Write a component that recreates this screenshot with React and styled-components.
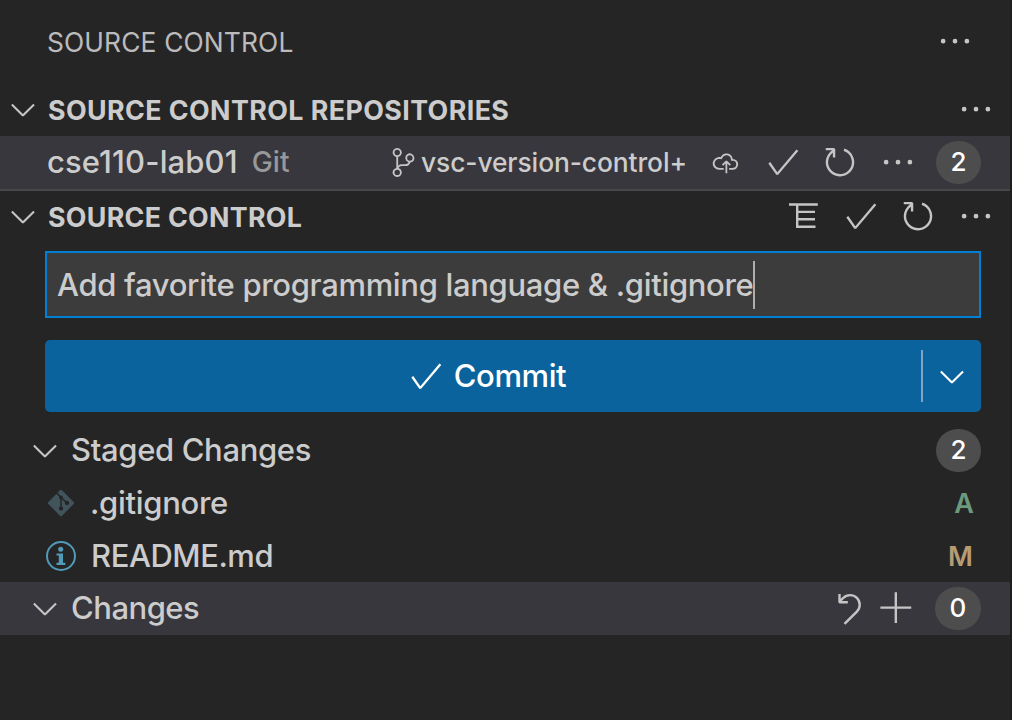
import React from "react";
import styled, { createGlobalStyle } from "styled-components";
import {
  VscChevronDown,
  VscCheck,
  VscRefresh,
  VscEllipsis,
  VscSourceControl,
  VscCloudUpload,
  VscDiscard,
  VscAdd,
} from "react-icons/vsc";

const GlobalStyle = createGlobalStyle`
  * { box-sizing: border-box; }
  body { margin: 0; background: #252526; }
`;

const Sidebar = styled.main`
  width: 1012px;
  height: 720px;
  display: flex;
  flex-direction: column;
  overflow: hidden;
  background: #252526;
  border-right: 2px solid #1e1e1e;
  color: #cccccc;
  font-family: Inter, "Liberation Sans", sans-serif;
  font-size: 31px;
  white-space: nowrap;
`;

const Row = styled.div`
  display: flex;
  align-items: center;
  flex: none;
  height: ${(p) => p.$height || 53}px;
  padding-left: ${(p) => p.$indent || 0}px;
  padding-right: ${(p) => p.$end ?? 29}px;
  background: ${(p) => (p.$active ? "#37373d" : "transparent")};
`;

const Divider = styled.div`
  flex: none;
  height: 2px;
  background: #474747;
`;

const Text = styled.span`
  display: block;
  flex: none;
  font-size: ${(p) => p.$size || 31}px;
  font-weight: ${(p) => p.$weight || 450};
  letter-spacing: ${(p) => p.$track || 0}px;
  color: ${(p) => p.$color || "#cccccc"};
  margin-left: ${(p) => p.$gap || 0}px;
  margin-bottom: ${(p) => p.$lift ?? 2}px;
  line-height: 1;
`;

const Spacer = styled.div`
  flex: 1;
`;

const IconSlot = styled.span`
  display: flex;
  flex: none;
  align-items: center;
  justify-content: center;
  width: ${(p) => p.$w || 38}px;
  margin-left: ${(p) => p.$gap || 0}px;
  margin-bottom: ${(p) => p.$lift || 0}px;
  color: ${(p) => p.$color || "#c5c5c5"};
`;

const Badge = styled.span`
  display: flex;
  flex: none;
  align-items: center;
  justify-content: center;
  width: ${(p) => p.$w || 45}px;
  height: 43px;
  margin-left: ${(p) => p.$gap || 0}px;
  padding-bottom: 1px;
  border-radius: 22px;
  background: #4d4d4d;
  color: #ffffff;
  font-size: 26px;
  font-weight: 500;
  line-height: 1;
`;

const MessageInput = styled.div`
  display: flex;
  align-items: center;
  flex: none;
  height: 67px;
  margin: 8px 29px 22px 45px;
  padding-left: 10px;
  border: 2px solid #007fd4;
  background: #3c3c3c;
`;

const Caret = styled.span`
  width: 2px;
  height: 48px;
  background: #aeafad;
`;

const CommitButton = styled.div`
  display: flex;
  align-items: center;
  flex: none;
  height: 72px;
  margin: 0 29px 12px 45px;
  border-radius: 5px;
  background: #0a639c;
`;

const CommitAction = styled.div`
  display: flex;
  align-items: center;
  justify-content: center;
  flex: 1;
  padding-left: 7px;
`;

const ButtonSeparator = styled.span`
  width: 2px;
  height: 52px;
  background: #7fa4c6;
`;

const DropdownAction = styled.div`
  display: flex;
  align-items: center;
  justify-content: center;
  width: 58px;
`;

const TreeIcon = () => (
  <svg width="38" height="38" viewBox="0 0 38 38" fill="none" stroke="currentColor" strokeWidth="2.4">
    <path d="M4 7.5 H32.8 M12.2 7.5 V30.9 M12.2 14.9 H30 M12.2 22.3 H30 M11 29.7 H30.5" />
  </svg>
);

const GitFileIcon = () => (
  <svg width="28" height="28" viewBox="0 0 28 28">
    <rect x="4.3" y="4.3" width="19.4" height="19.4" rx="1.5" transform="rotate(45 14 14)" fill="#41535b" />
    <g stroke="#252526" strokeWidth="1.5" fill="#252526">
      <path d="M8.8 3.2 L20 14 M14 8 V20" fill="none" />
      <circle cx="14" cy="19.6" r="1.4" />
      <circle cx="20" cy="14" r="1.4" />
      <circle cx="14" cy="8.4" r="1.1" />
    </g>
  </svg>
);

const InfoFileIcon = () => (
  <svg width="30" height="30" viewBox="0 0 30 30" fill="#519aba">
    <circle cx="15" cy="15" r="14" fill="none" stroke="#519aba" strokeWidth="2" />
    <circle cx="14.7" cy="8.3" r="2.5" />
    <path d="M10.5 12.5 H17 V21.8 H19.3 V24 H10.5 V21.8 H12.8 V14.5 H10.5 Z" />
  </svg>
);

const Chevron = ({ lift = 1 }) => (
  <IconSlot $lift={lift}>
    <VscChevronDown size={38.4} />
  </IconSlot>
);

const Action = ({ icon: Icon, gap = 0, size = 38.4, lift = 1 }) => (
  <IconSlot $gap={gap} $lift={lift}>
    <Icon size={size} />
  </IconSlot>
);

export default function App() {
  return (
    <>
      <GlobalStyle />
      <Sidebar>
        <Row $height={83} $indent={47} $end={36}>
          <Text $size={26.4} $weight={400} $lift={-1} $track={0.12} $color="#bbbbbb">SOURCE CONTROL</Text>
          <Spacer />
          <Action icon={VscEllipsis} />
        </Row>

        <Row $indent={4} $end={15}>
          <Chevron />
          <Text $size={26.8} $weight={700} $gap={6} $lift={-1} $track={0.42}>SOURCE CONTROL REPOSITORIES</Text>
          <Spacer />
          <Action icon={VscEllipsis} />
        </Row>
        <Row $indent={47} $active>
          <Text $track={0.12}>cse110-lab01</Text>
          <Text $size={28.2} $gap={14} $color="#98989b" $lift={0}>Git</Text>
          <Spacer />
          <IconSlot $w={29} $lift={1}>
            <VscSourceControl size={29} />
          </IconSlot>
          <Text $size={26.4} $gap={3} $lift={0} $track={-0.1}>vsc-version-control+</Text>
          <IconSlot $w={29} $gap={24} $lift={1}>
            <VscCloudUpload size={29} />
          </IconSlot>
          <Action icon={VscCheck} gap={24} />
          <Action icon={VscRefresh} gap={19} />
          <Action icon={VscEllipsis} gap={20} />
          <Badge $gap={19}>2</Badge>
        </Row>
        <Divider />

        <Row $height={52} $indent={4} $end={15}>
          <Chevron lift={2} />
          <Text $size={26.8} $weight={700} $gap={6} $lift={0} $track={0.3}>SOURCE CONTROL</Text>
          <Spacer />
          <Action icon={TreeIcon} lift={2} />
          <Action icon={VscCheck} gap={19} lift={2} />
          <Action icon={VscRefresh} gap={19} lift={2} />
          <Action icon={VscEllipsis} gap={20} lift={2} />
        </Row>

        <MessageInput>
          <Text $track={-0.32} $lift={0}>Add favorite programming language &amp; .gitignore</Text>
          <Caret />
        </MessageInput>

        <CommitButton>
          <CommitAction>
            <IconSlot $color="#ffffff">
              <VscCheck size={38.4} />
            </IconSlot>
            <Text $gap={9} $color="#ffffff" $lift={0} $track={-0.4}>Commit</Text>
          </CommitAction>
          <ButtonSeparator />
          <DropdownAction>
            <IconSlot $color="#ffffff">
              <VscChevronDown size={38.4} />
            </IconSlot>
          </DropdownAction>
        </CommitButton>

        <Row $indent={26}>
          <Chevron />
          <Text $gap={7} $track={-0.35}>Staged Changes</Text>
          <Spacer />
          <Badge>2</Badge>
        </Row>
        <Row $indent={46} $end={36}>
          <IconSlot $w={30} $lift={1}>
            <GitFileIcon />
          </IconSlot>
          <Text $gap={14} $track={-0.3}>.gitignore</Text>
          <Spacer />
          <Text $size={27} $weight={600} $color="#6b9a7c" $lift={0}>A</Text>
        </Row>
        <Row $height={52} $indent={46} $end={37}>
          <IconSlot $w={30}>
            <InfoFileIcon />
          </IconSlot>
          <Text $gap={15} $track={-0.45}>README.md</Text>
          <Spacer />
          <Text $size={27} $weight={600} $color="#b89b72" $lift={0}>M</Text>
        </Row>
        <Row $indent={26} $active>
          <Chevron lift={0} />
          <Text $gap={7} $track={-0.5}>Changes</Text>
          <Spacer />
          <Action icon={VscDiscard} lift={0} />
          <Action icon={VscAdd} gap={10} size={39.5} lift={0} />
          <Badge $gap={19} $w={46}>0</Badge>
        </Row>
      </Sidebar>
    </>
  );
}
